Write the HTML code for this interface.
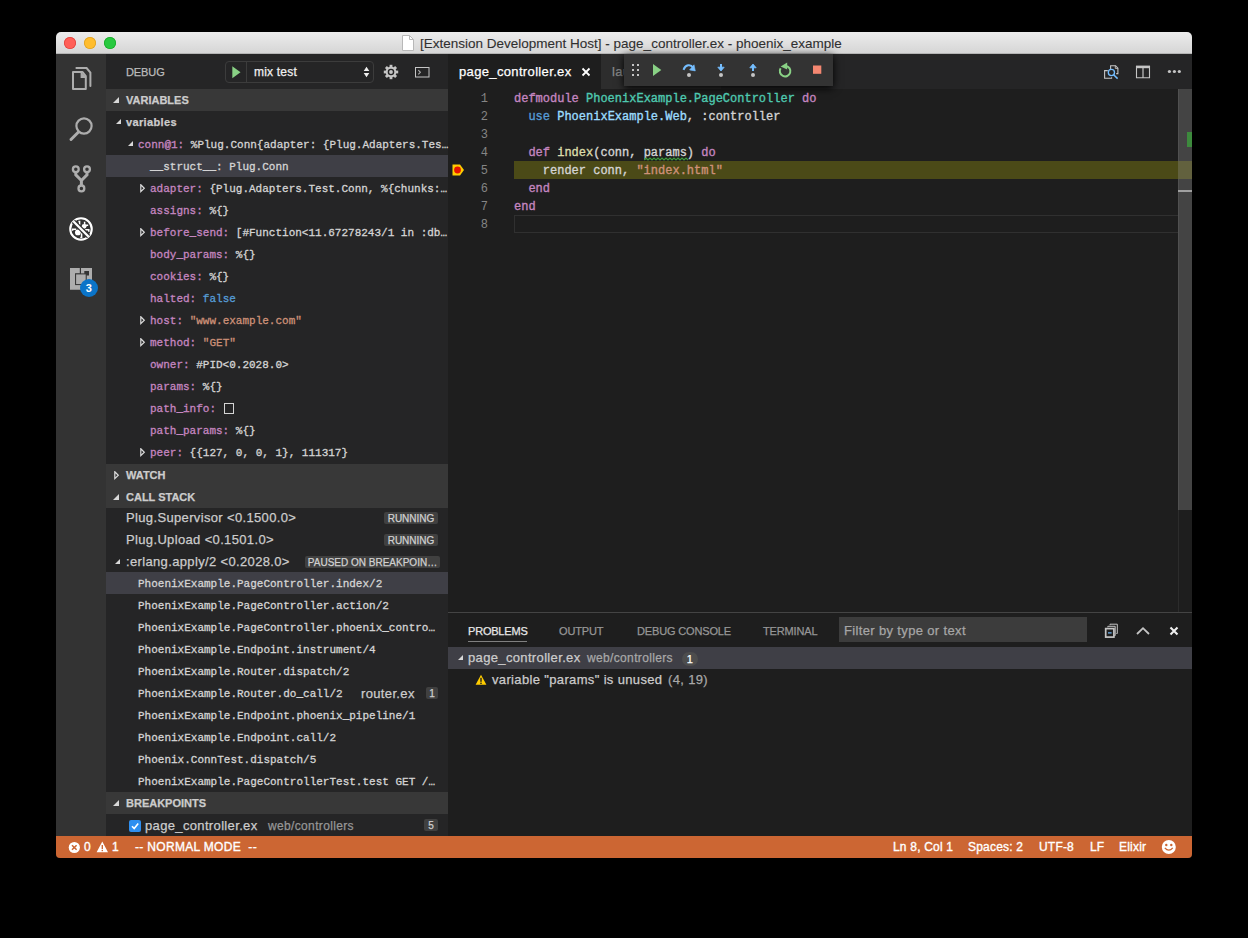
<!DOCTYPE html>
<html><head><meta charset="utf-8">
<style>
*{margin:0;padding:0;box-sizing:border-box}
html,body{width:1248px;height:938px;background:#000;overflow:hidden}
body{font-family:"Liberation Sans",sans-serif;font-size:13px;color:#ccc;position:relative;letter-spacing:0.35px;-webkit-text-stroke:0.25px}
.a{position:absolute;white-space:nowrap}
.m{font-family:"Liberation Mono",monospace}
#win{position:absolute;left:56px;top:32px;width:1136px;height:826px;background:#1e1e1e;border-radius:5px 5px 4px 4px;overflow:hidden}
#g{position:absolute;left:-56px;top:-32px;width:1248px;height:938px}
#title{position:absolute;left:56px;top:32px;width:1136px;height:22px;background:linear-gradient(#ececec,#d6d6d6);border-bottom:1px solid #b4b4b4}
.tl{position:absolute;top:37px;width:12px;height:12px;border-radius:50%}
#act{position:absolute;left:56px;top:54px;width:50px;height:782px;background:#333}
#side{position:absolute;left:106px;top:54px;width:342px;height:782px;background:#252526}
.hdr{position:absolute;left:106px;width:342px;height:22px;background:#383838}
.ht{position:absolute;letter-spacing:0;font-weight:bold;font-size:11px;color:#cccccc;line-height:22px;height:22px}
.row{position:absolute;height:22px;line-height:22px;white-space:nowrap}
.var{font-family:"Liberation Mono",monospace;font-size:11px;letter-spacing:0;padding-top:1px;-webkit-text-stroke:0.3px}
.nm{color:#c586c0}
.vl{color:#d4d4d4}
.st{color:#ce9178}
.bl{color:#569cd6}
.tri{position:absolute;width:0;height:0}
.dn{border-left:6px solid transparent;border-bottom:6px solid #d8d8d8}
.rt{border-left:5px solid #c5c5c5;border-top:4px solid transparent;border-bottom:4px solid transparent}
.rto{position:absolute;width:0;height:0;border-left:5px solid #c5c5c5;border-top:4px solid transparent;border-bottom:4px solid transparent}
.badge{position:absolute;white-space:nowrap;overflow:hidden;letter-spacing:0;background:#404040;color:#d0d0d0;font-size:10px;border-radius:2px;height:12px;line-height:13px;text-align:center}
.code{position:absolute;letter-spacing:0;padding-top:1px;-webkit-text-stroke:0.35px;font-family:"Liberation Mono",monospace;font-size:12px;height:18px;line-height:18px;white-space:pre;color:#d4d4d4}
.ln{position:absolute;letter-spacing:0;padding-top:1px;-webkit-text-stroke:0;left:448px;width:40px;font-family:"Liberation Mono",monospace;font-size:12px;height:18px;line-height:18px;color:#858585;text-align:right}
#status{position:absolute;left:56px;top:836px;width:1136px;height:22px;background:#cc6633}
.sb{position:absolute;letter-spacing:0.2px;-webkit-text-stroke:0.35px #fff;top:836px;height:22px;line-height:22px;color:#fff;font-size:12px;white-space:nowrap}
</style></head>
<body>
<div id="win"><div id="g">
  <!-- title bar -->
  <div id="title"></div>
  <div class="tl" style="left:64px;background:#ff5f57;box-shadow:inset 0 0 0 0.8px #e0443e"></div>
  <div class="tl" style="left:84px;background:#ffbd2e;box-shadow:inset 0 0 0 0.8px #dea123"></div>
  <div class="tl" style="left:104px;background:#28c940;box-shadow:inset 0 0 0 0.8px #1aab29"></div>
  <svg class="a" style="left:402px;top:35px" width="12" height="16" viewBox="0 0 12 16"><path d="M0.5 0.5H7.5L11.5 4.5V15.5H0.5Z" fill="#fff" stroke="#b8b8b8"/><path d="M7.5 0.5V4.5H11.5" fill="none" stroke="#b8b8b8"/></svg>
  <div class="a" style="left:420px;top:33px;height:22px;line-height:22px;color:#303030;font-size:13.5px;letter-spacing:0;-webkit-text-stroke:0.1px">[Extension Development Host] - page_controller.ex - phoenix_example</div>

  <!-- activity bar -->
  <div id="act"></div>
  <svg class="a" style="left:56px;top:54px" width="50" height="250" viewBox="0 0 50 250">
    <g fill="none" stroke="#adadad" stroke-width="2">
      <!-- files -->
      <path d="M17 18.1H26.6L29.8 22.2V35H17Z" stroke-linejoin="round"/>
      <path d="M25.2 18.6L29.3 23.3H25.2Z" fill="#adadad" stroke-width="1.2"/>
      <path d="M20.4 14.1H30.6L34.4 18.6V32" stroke-linecap="round"/>
      <!-- search -->
      <circle cx="28" cy="72" r="7.6" stroke-width="2.2"/>
      <path d="M15 85.5L22.5 78" stroke-width="3" stroke-linecap="round"/>
      <!-- git -->
      <circle cx="19.8" cy="115.2" r="2.9" stroke-width="2.3"/>
      <circle cx="31" cy="115.2" r="2.9" stroke-width="2.3"/>
      <circle cx="25.4" cy="134.4" r="2.9" stroke-width="2.3"/>
      <path d="M19.8 118.3V120.8L25.4 126.5V131.3M31 118.3V120.8L25.4 126.5" stroke-width="3"/>
    </g>
    <!-- debug -->
    <g>
      <circle cx="25" cy="175" r="10.75" fill="none" stroke="#fff" stroke-width="2.1"/>
      <circle cx="21.9" cy="178.4" r="2.9" fill="#fff"/>
      <circle cx="28.1" cy="172.3" r="2.4" fill="#fff"/>
      <path d="M16.6 176.8V175.2H20.2M25.6 179.3V183.4H24.3M23.6 170.8V167.6H22.4M29.2 175.8H32.8V177.8M28.6 167.8V170.4M29.3 171.2H32.2" fill="none" stroke="#fff" stroke-width="1.5"/>
      <path d="M17.3 167.3L32.7 182.7" stroke="#333" stroke-width="4.6"/>
      <path d="M17.3 167.3L32.7 182.7" stroke="#fff" stroke-width="2.3"/>
    </g>
    <!-- extensions -->
    <g>
      <path d="M14 214H23.8V219.4H19.1V230.6H30.2V221.5H36V235.8H14Z" fill="#adadad"/>
      <rect x="25" y="214" width="11" height="8" fill="#adadad"/>
      <rect x="28.3" y="217" width="4.7" height="4.5" fill="#333"/>
      <rect x="19.6" y="219.9" width="10.6" height="10.7" fill="#adadad" stroke="#333" stroke-width="1"/>
    </g>
    <circle cx="33" cy="234" r="9" fill="#0b74c8"/>
    <text x="33" y="238" fill="#fff" font-family="Liberation Sans" font-weight="bold" font-size="11" text-anchor="middle">3</text>
  </svg>

  <!-- sidebar -->
  <div id="side"></div>
  <div class="a" style="left:126px;top:55px;height:35px;line-height:35px;font-size:11px;color:#bbbbbb;letter-spacing:-0.1px">DEBUG</div>
  <div class="a" style="left:225px;top:61px;width:149px;height:22px;border:1px solid #3c3c3c;border-radius:4px"></div>
  <div class="a" style="left:246px;top:62px;width:1px;height:20px;background:#3c3c3c"></div>
  <svg class="a" style="left:231.5px;top:65.5px" width="9" height="13"><path d="M0.3 0.3L8.5 6.2L0.3 12.2Z" fill="#89d185"/></svg>
  <div class="a" style="left:254px;top:61px;height:22px;line-height:22px;font-size:12px;color:#f0f0f0;letter-spacing:0.2px">mix test</div>
  <svg class="a" style="left:363px;top:66px" width="7" height="12"><path d="M3.5 0.8L6.3 5H0.7Z M0.7 7H6.3L3.5 11.2Z" fill="#eee"/></svg>
  <svg class="a" style="left:383px;top:64px" width="16" height="16" viewBox="0 0 16 16">
    <g fill="#c5c5c5"><circle cx="8" cy="8" r="5.4"/>
    <rect x="6.6" y="0.8" width="2.8" height="14.4"/><rect x="0.8" y="6.6" width="14.4" height="2.8"/>
    <rect x="6.6" y="0.8" width="2.8" height="14.4" transform="rotate(45 8 8)"/><rect x="6.6" y="0.8" width="2.8" height="14.4" transform="rotate(-45 8 8)"/></g>
    <circle cx="8" cy="8" r="2.6" fill="none" stroke="#252526" stroke-width="1.4"/>
  </svg>
  <svg class="a" style="left:415px;top:67px" width="15" height="11"><rect x="0.5" y="0.5" width="13.5" height="9.5" fill="none" stroke="#c5c5c5"/><path d="M3.3 3.2L5.4 5.3L3.3 7.4" fill="none" stroke="#aaa" stroke-width="1.1"/></svg>

  <!-- VARIABLES -->
  <div class="hdr" style="top:89px"></div>
  <div class="tri dn" style="left:113px;top:97px"></div>
  <div class="ht" style="left:126px;top:89px">VARIABLES</div>
  <div class="tri dn" style="left:115.5px;top:118.5px;border-left-width:5.5px;border-bottom-width:5.5px"></div>
  <div class="row" style="left:126px;top:111px;font-weight:bold;font-size:11px;color:#cccccc">variables</div>
  <div class="tri dn" style="left:128px;top:141px;border-left-width:5px;border-bottom-width:5px"></div>
  <div class="row var" style="left:138px;top:133px"><span class="nm">conn@1:</span><span class="vl"> %Plug.Conn{adapter: {Plug.Adapters.Tes…</span></div>
  <div class="a" style="left:106px;top:155px;width:342px;height:22px;background:#3f3f46"></div>
  <div class="row var vl" style="left:150px;top:155px">__struct__: Plug.Conn</div>
  <svg class="a" style="left:140px;top:184px" width="6" height="10"><path d="M0.8 0.8L4.3 4.2L0.8 7.6Z" fill="none" stroke="#dcdcdc" stroke-width="1.2"/></svg>
  <div class="row var" style="left:150px;top:177px"><span class="nm">adapter:</span><span class="vl"> {Plug.Adapters.Test.Conn, %{chunks:…</span></div>
  <div class="row var" style="left:150px;top:199px"><span class="nm">assigns:</span><span class="vl"> %{}</span></div>
  <svg class="a" style="left:140px;top:228px" width="6" height="10"><path d="M0.8 0.8L4.3 4.2L0.8 7.6Z" fill="none" stroke="#dcdcdc" stroke-width="1.2"/></svg>
  <div class="row var" style="left:150px;top:221px"><span class="nm">before_send:</span><span class="vl"> [#Function&lt;11.67278243/1 in :db…</span></div>
  <div class="row var" style="left:150px;top:243px"><span class="nm">body_params:</span><span class="vl"> %{}</span></div>
  <div class="row var" style="left:150px;top:265px"><span class="nm">cookies:</span><span class="vl"> %{}</span></div>
  <div class="row var" style="left:150px;top:287px"><span class="nm">halted:</span><span class="vl"> </span><span class="bl">false</span></div>
  <svg class="a" style="left:140px;top:316px" width="6" height="10"><path d="M0.8 0.8L4.3 4.2L0.8 7.6Z" fill="none" stroke="#dcdcdc" stroke-width="1.2"/></svg>
  <div class="row var" style="left:150px;top:309px"><span class="nm">host:</span><span class="vl"> </span><span class="st">"www.example.com"</span></div>
  <svg class="a" style="left:140px;top:338px" width="6" height="10"><path d="M0.8 0.8L4.3 4.2L0.8 7.6Z" fill="none" stroke="#dcdcdc" stroke-width="1.2"/></svg>
  <div class="row var" style="left:150px;top:331px"><span class="nm">method:</span><span class="vl"> </span><span class="st">"GET"</span></div>
  <div class="row var" style="left:150px;top:353px"><span class="nm">owner:</span><span class="vl"> #PID&lt;0.2028.0&gt;</span></div>
  <div class="row var" style="left:150px;top:375px"><span class="nm">params:</span><span class="vl"> %{}</span></div>
  <div class="row var" style="left:150px;top:397px"><span class="nm">path_info:</span><span class="vl"> </span></div>
  <div class="a" style="left:224px;top:403px;width:10px;height:11px;border:1.2px solid #d4d4d4"></div>
  <div class="row var" style="left:150px;top:419px"><span class="nm">path_params:</span><span class="vl"> %{}</span></div>
  <svg class="a" style="left:140px;top:448px" width="6" height="10"><path d="M0.8 0.8L4.3 4.2L0.8 7.6Z" fill="none" stroke="#dcdcdc" stroke-width="1.2"/></svg>
  <div class="row var" style="left:150px;top:441px"><span class="nm">peer:</span><span class="vl"> {{127, 0, 0, 1}, 111317}</span></div>

  <!-- WATCH -->
  <div class="hdr" style="top:464px"></div>
  <svg class="a" style="left:114px;top:471px" width="6" height="10"><path d="M0.8 0.8L4.3 4.2L0.8 7.6Z" fill="none" stroke="#dcdcdc" stroke-width="1.2"/></svg>
  <div class="ht" style="left:126px;top:464px">WATCH</div>
  <!-- CALL STACK -->
  <div class="hdr" style="top:486px"></div>
  <div class="tri dn" style="left:113px;top:494px"></div>
  <div class="ht" style="left:126px;top:486px">CALL STACK</div>
  <div class="row" style="left:126px;top:507px;color:#ccc">Plug.Supervisor &lt;0.1500.0&gt;</div>
  <div class="badge" style="left:384px;top:512px;width:54px">RUNNING</div>
  <div class="row" style="left:126px;top:529px;color:#ccc">Plug.Upload &lt;0.1501.0&gt;</div>
  <div class="badge" style="left:384px;top:534px;width:54px">RUNNING</div>
  <div class="tri dn" style="left:115px;top:559px;border-left-width:5px;border-bottom-width:5px"></div>
  <div class="row" style="left:126px;top:551px;color:#ccc">:erlang.apply/2 &lt;0.2028.0&gt;</div>
  <div class="badge" style="left:305px;top:556px;width:135px">PAUSED ON BREAKPOIN…</div>
  <div class="a" style="left:106px;top:572px;width:342px;height:22px;background:#3f3f46"></div>
  <div class="row var vl" style="left:138px;top:572px">PhoenixExample.PageController.index/2</div>
  <div class="row var vl" style="left:138px;top:594px">PhoenixExample.PageController.action/2</div>
  <div class="row var vl" style="left:138px;top:616px">PhoenixExample.PageController.phoenix_contro…</div>
  <div class="row var vl" style="left:138px;top:638px">PhoenixExample.Endpoint.instrument/4</div>
  <div class="row var vl" style="left:138px;top:660px">PhoenixExample.Router.dispatch/2</div>
  <div class="row var vl" style="left:138px;top:682px">PhoenixExample.Router.do_call/2</div>
  <div class="row" style="left:361px;top:683px;color:#ccc">router.ex</div>
  <div class="badge" style="left:426px;top:687px;width:12px">1</div>
  <div class="row var vl" style="left:138px;top:704px">PhoenixExample.Endpoint.phoenix_pipeline/1</div>
  <div class="row var vl" style="left:138px;top:726px">PhoenixExample.Endpoint.call/2</div>
  <div class="row var vl" style="left:138px;top:748px">Phoenix.ConnTest.dispatch/5</div>
  <div class="row var vl" style="left:138px;top:770px">PhoenixExample.PageControllerTest.test GET /…</div>
  <!-- BREAKPOINTS -->
  <div class="hdr" style="top:792px"></div>
  <div class="tri dn" style="left:113px;top:800px"></div>
  <div class="ht" style="left:126px;top:792px">BREAKPOINTS</div>
  <div class="a" style="left:129px;top:820px;width:12px;height:12px;background:#2f8ff0;border-radius:2px"></div>
  <svg class="a" style="left:129px;top:820px" width="12" height="12"><path d="M3 6.2L5.2 8.5L9.2 3.5" fill="none" stroke="#fff" stroke-width="1.6"/></svg>
  <div class="row" style="left:145px;top:815px;color:#ccc">page_controller.ex</div>
  <div class="row" style="left:268px;top:815px;color:#969696;font-size:12px">web/controllers</div>
  <div class="badge" style="left:424px;top:819px;width:14px">5</div>

  <!-- EDITOR -->
  <div class="a" style="left:448px;top:54px;width:744px;height:35px;background:#252526"></div>
  <div class="a" style="left:448px;top:54px;width:153px;height:35px;background:#1e1e1e"></div>
  <div class="a" style="left:459px;top:54px;height:35px;line-height:35px;color:#fff;font-size:13px">page_controller.ex</div>
  <svg class="a" style="left:581px;top:67px" width="10" height="10"><path d="M1.5 1.5L8.5 8.5M8.5 1.5L1.5 8.5" stroke="#fff" stroke-width="1.8"/></svg>
  <div class="a" style="left:601px;top:54px;width:120px;height:35px;background:#2d2d2d"></div>
  <div class="a" style="left:612px;top:54px;height:35px;line-height:35px;color:#8a8a8a;font-size:13px">launch.json</div>

  <!-- debug toolbar -->
  <div class="a" style="left:624px;top:54px;width:209px;height:32px;background:#333333;box-shadow:0 2px 8px #000"></div>
  <svg class="a" style="left:624px;top:54px" width="209" height="32" viewBox="0 0 209 32">
    <g fill="#c5c5c5"><rect x="8" y="10" width="2" height="2"/><rect x="13" y="10" width="2" height="2"/><rect x="8" y="15" width="2" height="2"/><rect x="13" y="15" width="2" height="2"/><rect x="8" y="20" width="2" height="2"/><rect x="13" y="20" width="2" height="2"/></g>
    <path d="M29 10L37.3 16L29 22Z" fill="#89d185"/>
    <path d="M59.5 15.8C61.5 10.6 66.5 9.8 69.2 13.8" fill="none" stroke="#75beff" stroke-width="2"/>
    <path d="M70 10.8L71.3 16.9L65.6 15.9Z" fill="#75beff" stroke="#75beff" stroke-width="0.6" stroke-linejoin="round"/>
    <circle cx="65" cy="21" r="2" fill="#c5c5c5"/>
    <path d="M97 10V15.5" stroke="#75beff" stroke-width="2"/><path d="M93.8 13.2L97 17L100.2 13.2Z" fill="#75beff" stroke="#75beff" stroke-width="0.8"/>
    <circle cx="97" cy="21" r="2" fill="#c5c5c5"/>
    <path d="M129 11.5V17" stroke="#75beff" stroke-width="2"/><path d="M125.8 13.8L129 10L132.2 13.8Z" fill="#75beff" stroke="#75beff" stroke-width="0.8"/>
    <circle cx="129" cy="21" r="2" fill="#c5c5c5"/>
    <path d="M156.6 14.3A5.3 5.3 0 1 0 162 11.9" fill="none" stroke="#89d185" stroke-width="2"/>
    <path d="M163.2 8.4L156.6 12.4L163.2 15.4Z" fill="#89d185"/>
    <rect x="189" y="11.5" width="8.3" height="8.3" fill="#f48771"/>
  </svg>

  <!-- editor actions -->
  <svg class="a" style="left:1100px;top:62px" width="22" height="20" viewBox="0 0 22 20">
    <path d="M10.6 7V3.7H15.6L17.9 6.1V11.6H16.2" fill="none" stroke="#c5c5c5" stroke-width="1.1"/>
    <path d="M15.3 3.7V6.4H17.9" fill="none" stroke="#c5c5c5" stroke-width="0.9"/>
    <path d="M7.8 8.6H4.6V16.3H11.6V15.2" fill="none" stroke="#c5c5c5" stroke-width="1.1"/>
    <circle cx="11.4" cy="10.5" r="3.1" fill="none" stroke="#75beff" stroke-width="1.3"/>
    <path d="M13.6 12.7L17.6 16.6" stroke="#75beff" stroke-width="1.5"/>
  </svg>
  <svg class="a" style="left:1135px;top:65px" width="16" height="14"><path d="M1.5 1.3H14.5V12.7H1.5Z" fill="none" stroke="#c5c5c5" stroke-width="1.1"/><rect x="1" y="0.8" width="14" height="2.4" fill="#c5c5c5"/><path d="M8 2V13" stroke="#c5c5c5" stroke-width="1.2"/></svg>
  <svg class="a" style="left:1166px;top:69px" width="16" height="6"><circle cx="3.4" cy="2.5" r="1.6" fill="#c5c5c5"/><circle cx="8.4" cy="2.5" r="1.6" fill="#c5c5c5"/><circle cx="13.3" cy="2.5" r="1.6" fill="#c5c5c5"/></svg>

  <!-- code -->
  <div class="ln" style="top:89px">1</div>
  <div class="ln" style="top:107px">2</div>
  <div class="ln" style="top:125px">3</div>
  <div class="ln" style="top:143px">4</div>
  <div class="ln" style="top:161px">5</div>
  <div class="ln" style="top:179px">6</div>
  <div class="ln" style="top:197px">7</div>
  <div class="ln" style="top:215px">8</div>
  <div class="a" style="left:514px;top:161px;width:664px;height:18px;background:#4b4a17"></div>
  <div class="a" style="left:514px;top:215px;width:678px;height:18px;border:1px solid #303030;border-right:0"></div>
  <div class="code" style="left:514px;top:89px"><span class="nm">defmodule</span> <span style="color:#4ec9b0">PhoenixExample.PageController</span> <span class="nm">do</span></div>
  <div class="code" style="left:514px;top:107px">  <span class="bl">use</span> <span style="color:#9cdcfe">PhoenixExample.Web</span>, :controller</div>
  <div class="code" style="left:514px;top:143px">  <span class="nm">def</span> <span style="color:#dcdcaa">index</span>(conn, params) <span class="nm">do</span></div>
  <div class="code" style="left:514px;top:161px">    render conn, <span class="st">"index.html"</span></div>
  <div class="code" style="left:514px;top:179px">  <span class="nm">end</span></div>
  <div class="code" style="left:514px;top:197px"><span class="nm">end</span></div>
  <svg class="a" style="left:644px;top:157px" width="44" height="4"><path d="M0 3L2 1L4 3L6 1L8 3L10 1L12 3L14 1L16 3L18 1L20 3L22 1L24 3L26 1L28 3L30 1L32 3L34 1L36 3L38 1L40 3L42 1L44 3" fill="none" stroke="#3c9c3c" stroke-width="1.2"/></svg>
  <!-- breakpoint marker -->
  <svg class="a" style="left:452px;top:164px" width="13" height="12"><path d="M0.5 0.5H8L12 6L8 11.5H0.5Z" fill="#ffcc00"/><circle cx="5.5" cy="6" r="3.4" fill="#e51400"/></svg>
  <!-- scrollbar / overview ruler -->
  <div class="a" style="left:1178px;top:89px;width:14px;height:523px;background:#1e1e1e;border-left:1px solid #2c2c2c"></div>
  <div class="a" style="left:1178px;top:89px;width:14px;height:421px;background:#444;border-left:1px solid #505050"></div>
  <div class="a" style="left:1187px;top:132px;width:5px;height:15px;background:#3d8a3d"></div>
  <div class="a" style="left:1178px;top:161px;width:14px;height:18px;background:#62613e"></div>
  <div class="a" style="left:1178px;top:190px;width:14px;height:2px;background:#a0a0a0"></div>

  <!-- PANEL -->
  <div class="a" style="left:448px;top:612px;width:744px;height:1px;background:#444"></div>
  <div class="a" style="left:468px;top:613px;height:36px;line-height:36px;font-size:11px;color:#e7e7e7;letter-spacing:-0.2px">PROBLEMS</div>
  <div class="a" style="left:468px;top:641px;width:59px;height:1px;background:#808080"></div>
  <div class="a" style="left:559px;top:613px;height:36px;line-height:36px;font-size:11px;color:#969696;letter-spacing:-0.15px">OUTPUT</div>
  <div class="a" style="left:637px;top:613px;height:36px;line-height:36px;font-size:11px;color:#969696;letter-spacing:-0.15px">DEBUG CONSOLE</div>
  <div class="a" style="left:763px;top:613px;height:36px;line-height:36px;font-size:11px;color:#969696;letter-spacing:-0.15px">TERMINAL</div>
  <div class="a" style="left:839px;top:617px;width:248px;height:25px;background:#3c3c3c"></div>
  <div class="a" style="left:844px;top:618px;height:25px;line-height:25px;font-size:13px;color:#a6a6a6">Filter by type or text</div>
  <svg class="a" style="left:1103px;top:622px" width="18" height="18"><path d="M7 3.2V2.2H14.3V11.5H13.4" fill="none" stroke="#c5c5c5" stroke-width="1"/><path d="M4.8 5.3V4.3H12.2V13.6H11.3" fill="none" stroke="#c5c5c5" stroke-width="1"/><rect x="2.7" y="6.6" width="8.2" height="8.5" fill="#1e1e1e" stroke="#c5c5c5" stroke-width="1.7"/><path d="M5 10.9H8.6" stroke="#75beff" stroke-width="1.2"/></svg>
  <svg class="a" style="left:1135px;top:625px" width="16" height="12"><path d="M2 9L8 3.2L14 9" fill="none" stroke="#c5c5c5" stroke-width="1.8"/></svg>
  <svg class="a" style="left:1168px;top:625px" width="12" height="12"><path d="M2.5 2.5L9.5 9.5M9.5 2.5L2.5 9.5" stroke="#eee" stroke-width="2.1"/></svg>
  <div class="a" style="left:448px;top:647px;width:744px;height:22px;background:#3f3f46"></div>
  <div class="tri dn" style="left:458px;top:655px;border-left-width:5px;border-bottom-width:5px"></div>
  <div class="row" style="left:468px;top:647px;color:#ccc">page_controller.ex</div>
  <div class="row" style="left:587px;top:647px;color:#a8a8a8;font-size:12px">web/controllers</div>
  <div class="a" style="left:682px;top:652px;width:16px;height:14px;border-radius:7px;background:#4d4d4d;color:#fff;font-size:11px;line-height:14px;text-align:center">1</div>
  <svg class="a" style="left:475px;top:674px" width="12" height="12"><path d="M6 0.8L11.4 10.8H0.6Z" fill="#ffcc00"/><rect x="5.3" y="3.8" width="1.4" height="4" fill="#1e1e1e"/><rect x="5.3" y="8.6" width="1.4" height="1.4" fill="#1e1e1e"/></svg>
  <div class="row" style="left:492px;top:669px;color:#ccc">variable "params" is unused</div>
  <div class="row" style="left:668px;top:669px;color:#a8a8a8">(4, 19)</div>

  <!-- STATUS BAR -->
  <div id="status"></div>
  <svg class="a" style="left:68px;top:841px" width="13" height="13"><circle cx="6.3" cy="6.5" r="5.6" fill="#fff"/><path d="M4 4.2L8.6 8.8M8.6 4.2L4 8.8" stroke="#cc6633" stroke-width="1.6"/></svg>
  <div class="sb" style="left:84px">0</div>
  <svg class="a" style="left:96px;top:841px" width="13" height="12"><path d="M6.3 0.5L12 11.2H0.6Z" fill="#fff"/><rect x="5.6" y="4" width="1.4" height="4" fill="#cc6633"/><rect x="5.6" y="8.8" width="1.4" height="1.4" fill="#cc6633"/></svg>
  <div class="sb" style="left:112px">1</div>
  <div class="sb" style="left:135px;letter-spacing:0.32px">-- NORMAL MODE&nbsp; --</div>
  <div class="sb" style="left:893px">Ln 8, Col 1</div>
  <div class="sb" style="left:968px">Spaces: 2</div>
  <div class="sb" style="left:1039px">UTF-8</div>
  <div class="sb" style="left:1090px">LF</div>
  <div class="sb" style="left:1119px">Elixir</div>
  <svg class="a" style="left:1161px;top:839px" width="16" height="16"><circle cx="7.8" cy="8" r="7" fill="#fff"/><circle cx="5.3" cy="6" r="1.2" fill="#cc6633"/><circle cx="10.3" cy="6" r="1.2" fill="#cc6633"/><path d="M3.8 8.8Q7.8 13.5 11.8 8.8" fill="none" stroke="#cc6633" stroke-width="1.3"/></svg>
</div></div>
</body></html>
